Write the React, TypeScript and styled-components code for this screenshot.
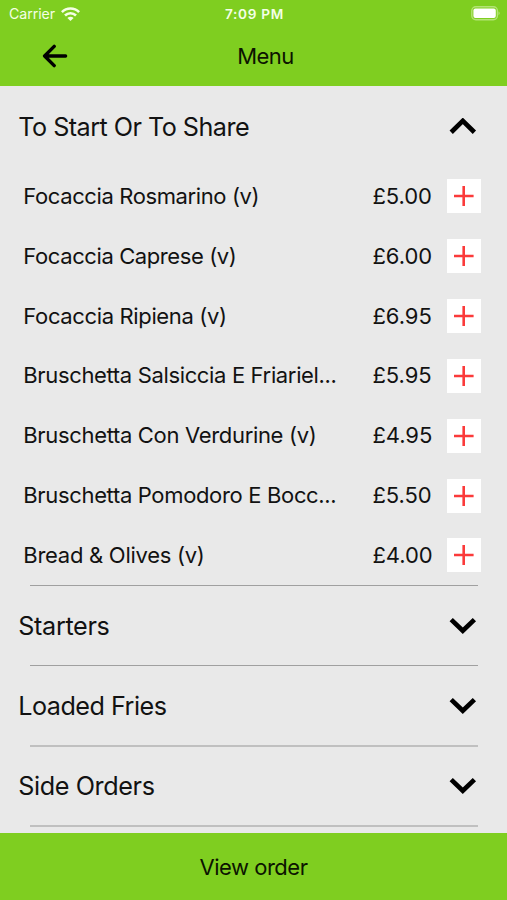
import React, { useState } from 'react';
import styled, { createGlobalStyle } from 'styled-components';

const GREEN = '#7fce20';

const GlobalStyle = createGlobalStyle`
  * { box-sizing: border-box; }
  html, body { margin: 0; padding: 0; background: #e9e9e9; }
  button { font: inherit; color: inherit; background: none; border: 0; padding: 0; margin: 0; }
`;

const Screen = styled.div`
  display: flex;
  flex-direction: column;
  width: 507px;
  height: 900px;
  overflow: hidden;
  background: #e9e9e9;
  color: #121212;
  font-family: Inter, "Liberation Sans", sans-serif;
`;

const Header = styled.header`
  flex: none;
  height: 86.4px;
  background: ${GREEN};
`;

const StatusBar = styled.div`
  display: grid;
  grid-template-columns: 1fr auto 1fr;
  align-items: center;
  height: 27px;
  padding: 0 7px 0 9px;
  color: #f4ffe6;
`;

const Carrier = styled.div`
  display: flex;
  align-items: center;
  gap: 6px;
  font-size: 14.2px;
  letter-spacing: -0.08px;
`;

const Clock = styled.div`
  font-size: 13.6px;
  font-weight: 600;
  letter-spacing: 0.7px;
`;

const BatteryIcon = styled.svg`
  justify-self: end;
`;

const TitleBar = styled.div`
  display: grid;
  grid-template-columns: 110px 1fr 86px;
  align-items: center;
  height: 58px;
  color: #0c1400;
`;

const BackButton = styled.button`
  display: flex;
  justify-content: center;
  color: #000;
`;

const Title = styled.h1`
  margin: 0;
  font-size: 22px;
  font-weight: 400;
  letter-spacing: -0.5px;
  text-align: center;
`;

const MenuList = styled.main`
  flex: 1;
  min-height: 0;
  overflow: hidden;
`;

const SectionHead = styled.button`
  display: flex;
  align-items: center;
  justify-content: space-between;
  width: 100%;
  height: 80px;
  padding: 1px 30px 0 18.3px;
  text-align: left;
`;

const SectionName = styled.span<{ $tracking: number }>`
  font-size: 25.2px;
  line-height: 32px;
  white-space: nowrap;
  letter-spacing: ${(p) => p.$tracking}px;
`;

const Items = styled.ul`
  margin: 0;
  padding: 0;
  list-style: none;
`;

const ItemRow = styled.li`
  display: grid;
  grid-template-columns: 1fr 74.6px 34px;
  align-items: center;
  height: 59.86px;
  padding: 0 26px 0 23.3px;
  font-size: 22px;
  line-height: 27px;
`;

const ItemName = styled.span<{ $tracking: number }>`
  white-space: nowrap;
  letter-spacing: ${(p) => p.$tracking}px;
`;

const Price = styled.span`
  white-space: nowrap;
  letter-spacing: -0.05px;
`;

const AddButton = styled.button`
  display: flex;
  align-items: center;
  justify-content: center;
  width: 34px;
  height: 34px;
  background: #fff;
`;

const Divider = styled.hr<{ $soft?: boolean }>`
  height: ${(p) => (p.$soft ? 2 : 1)}px;
  margin: 0 29px ${(p) => (p.$soft ? -2 : -1)}px 30px;
  border: 0;
  background: ${(p) => (p.$soft ? '#c0c0c0' : '#a0a0a0')};
`;

const OrderButton = styled.button`
  flex: none;
  height: 67px;
  background: ${GREEN};
  color: #0c1400;
  font-size: 22px;
  letter-spacing: -0.48px;
`;

type Item = { name: string; price: string; tracking: number };
type Section = { name: string; tracking: number; softDivider?: boolean; items: Item[] };

const sections: Section[] = [
  {
    name: 'To Start Or To Share',
    tracking: -0.54,
    items: [
      { name: 'Focaccia Rosmarino (v)', price: '£5.00', tracking: -0.39 },
      { name: 'Focaccia Caprese (v)', price: '£6.00', tracking: -0.4 },
      { name: 'Focaccia Ripiena (v)', price: '£6.95', tracking: -0.36 },
      { name: 'Bruschetta Salsiccia E Friariel...', price: '£5.95', tracking: -0.35 },
      { name: 'Bruschetta Con Verdurine (v)', price: '£4.95', tracking: -0.33 },
      { name: 'Bruschetta Pomodoro E Bocc...', price: '£5.50', tracking: -0.34 },
      { name: 'Bread & Olives (v)', price: '£4.00', tracking: -0.27 },
    ],
  },
  { name: 'Starters', tracking: -0.35, items: [] },
  { name: 'Loaded Fries', tracking: -0.52, softDivider: true, items: [] },
  { name: 'Side Orders', tracking: -0.4, softDivider: true, items: [] },
];

const Chevron = ({ up }: { up: boolean }) => (
  <svg width="28" height="18" viewBox="0 0 28 18" fill="none" stroke="#000" strokeWidth="4.7">
    <path d={up ? 'M2.2 14.3 13.8 2.9 25.4 14.3' : 'M2.2 2.6 13.8 13.8 25.4 2.6'} />
  </svg>
);

export default function App() {
  const [open, setOpen] = useState<string | null>(sections[0].name);

  return (
    <>
      <GlobalStyle />
      <Screen>
        <Header>
          <StatusBar>
            <Carrier>
              Carrier
              <svg width="19" height="14" viewBox="0 0 19 14" fill="none" stroke="currentColor" strokeWidth="2.6">
                <path d="M.9 5.1C5.6.2 13.4.2 18.1 5.1" />
                <path d="M4 8.5c3.1-3.1 7.9-3.1 11 0" />
                <path d="M6.4 11c1.8-1.7 4.4-1.7 6.2 0L9.5 14Z" fill="currentColor" stroke="none" />
              </svg>
            </Carrier>
            <Clock>7:09 PM</Clock>
            <BatteryIcon width="29" height="15" viewBox="0 0 29 15">
              <rect x="0.8" y="0.8" width="25.6" height="13" rx="4" fill="none" stroke="#b4e376" strokeWidth="1.4" />
              <rect x="2.4" y="2.6" width="22.4" height="9.4" rx="2" fill="#fff" />
              <path d="M27.5 5.4c1.6.8 1.6 3 0 3.8Z" fill="#b4e376" />
            </BatteryIcon>
          </StatusBar>
          <TitleBar>
            <BackButton aria-label="Back">
              <svg width="26" height="24" viewBox="0 0 26 24" fill="none" stroke="currentColor" strokeWidth="3.4" strokeLinecap="round" strokeLinejoin="round">
                <path d="M23.6 12H2.6M12.2 2.4 2.6 12l9.6 9.6" />
              </svg>
            </BackButton>
            <Title>Menu</Title>
          </TitleBar>
        </Header>

        <MenuList>
          {sections.map((section) => {
            const expanded = open === section.name;
            return (
              <section key={section.name}>
                <SectionHead aria-expanded={expanded} onClick={() => setOpen(expanded ? null : section.name)}>
                  <SectionName $tracking={section.tracking}>{section.name}</SectionName>
                  <Chevron up={expanded} />
                </SectionHead>
                {expanded && (
                  <Items>
                    {section.items.map((item) => (
                      <ItemRow key={item.name}>
                        <ItemName $tracking={item.tracking}>{item.name}</ItemName>
                        <Price>{item.price}</Price>
                        <AddButton aria-label={`Add ${item.name}`}>
                          <svg width="20" height="20" viewBox="0 0 20 20" stroke="#fb3a3a" strokeWidth="2.6">
                            <path d="M9.7 0v20M0 10h19.6" />
                          </svg>
                        </AddButton>
                      </ItemRow>
                    ))}
                  </Items>
                )}
                <Divider $soft={section.softDivider} />
              </section>
            );
          })}
        </MenuList>

        <OrderButton>View order</OrderButton>
      </Screen>
    </>
  );
}
